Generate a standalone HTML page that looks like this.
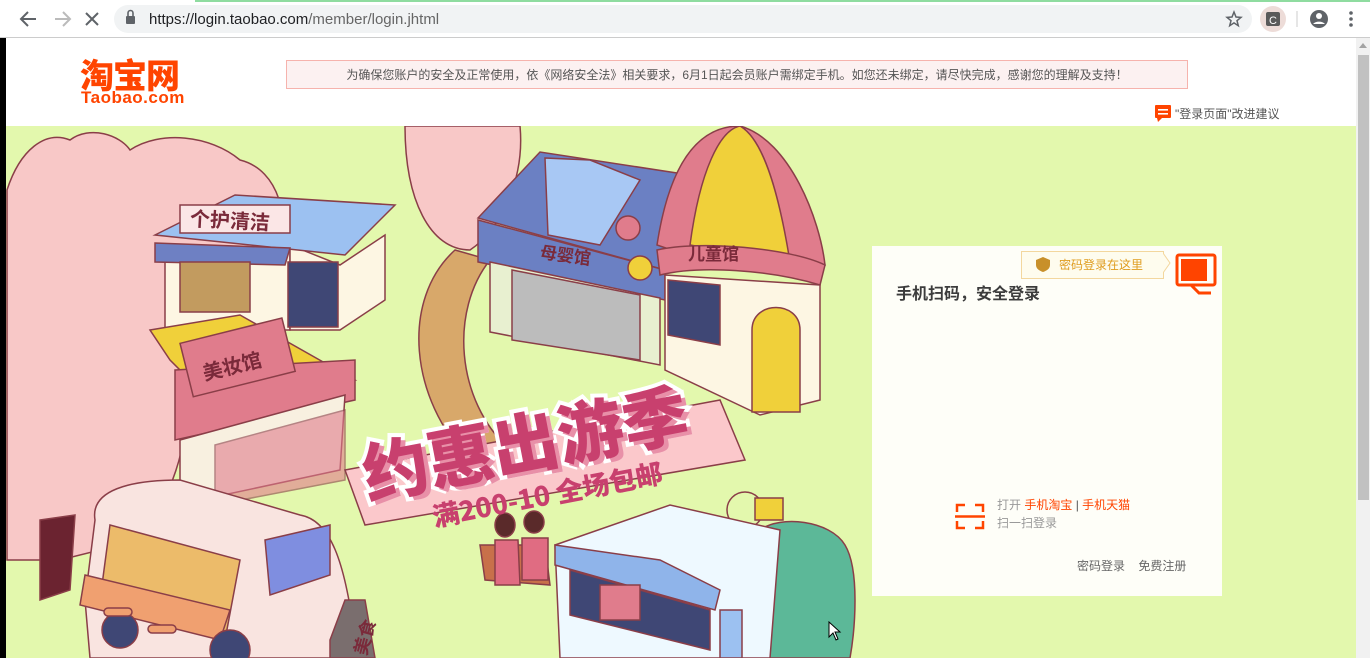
<!DOCTYPE html>
<html><head><meta charset="utf-8">
<style>
*{margin:0;padding:0;box-sizing:border-box}
body{width:1370px;height:658px;overflow:hidden;background:#fff;font-family:"Liberation Sans","Noto Sans CJK SC",sans-serif;position:relative}
.abs{position:absolute}
</style></head><body>
<div class="abs" style="left:0;top:0;width:1370px;height:38px;background:#fff;border-bottom:1px solid #ccc"></div>
<div class="abs" style="left:195px;top:0;width:1175px;height:2px;background:#8fdca0"></div>
<svg class="abs" style="left:0;top:0" width="1370" height="38">
<g stroke="#5f6368" stroke-width="2" fill="none">
<path d="M36 19H22M28 12l-7 7 7 7"/>
<path d="M55 19h14M63 12l7 7-7 7" stroke="#bbb"/>
<path d="M86 13l12 12M98 13l-12 12"/>
</g>
<rect x="114" y="5" width="1138" height="28" rx="14" fill="#f1f3f4"/>
<rect x="126" y="16" width="9" height="8" rx="1" fill="#5f6368"/>
<path d="M128 16v-3a2.5 2.5 0 0 1 5 0v3" stroke="#5f6368" stroke-width="1.6" fill="none"/>
<text x="149" y="24" font-family="Liberation Sans" font-size="15" fill="#202124">https://login.taobao.com<tspan fill="#666">/member/login.jhtml</tspan></text>
<path d="M1234 12l2 5 5 .4-4 3.3 1.3 5-4.3-2.8-4.3 2.8 1.3-5-4-3.3 5-.4z" stroke="#5f6368" stroke-width="1.5" fill="none"/>
<circle cx="1273" cy="19" r="13" fill="#eddcd8"/>
<rect x="1266" y="12" width="14" height="14" rx="2" fill="#5a5a5a"/>
<text x="1269" y="24" font-size="11" fill="#fff" font-family="Liberation Sans">C</text>
<line x1="1297" y1="11" x2="1297" y2="27" stroke="#ccc"/>
<circle cx="1319" cy="19" r="9" fill="#5f6368"/>
<circle cx="1319" cy="16" r="3" fill="#fff"/>
<path d="M1313 24a7 5 0 0 1 12 0" fill="#fff"/>
<g fill="#5f6368"><circle cx="1351" cy="13" r="1.8"/><circle cx="1351" cy="19" r="1.8"/><circle cx="1351" cy="25" r="1.8"/></g>
</svg>
<div class="abs" style="left:0;top:38px;width:6px;height:620px;background:#000"></div>
<div class="abs" style="left:1356px;top:38px;width:14px;height:620px;background:#f1f1f1"></div>
<div class="abs" style="left:1358px;top:55px;width:11px;height:445px;background:#c1c1c1"></div>
<div class="abs" style="left:1359px;top:43px;width:0;height:0;border-left:4px solid transparent;border-right:4px solid transparent;border-bottom:5px solid #a3a3a3"></div>
<div class="abs" style="left:80px;top:58px;color:#ff4400;font-size:34px;font-weight:900;font-family:'Noto Sans CJK SC',sans-serif;line-height:32px;height:32px;letter-spacing:-1px">淘宝网</div>
<div class="abs" style="left:81px;top:90px;color:#ff4400;font-size:17px;font-weight:bold;line-height:16px;letter-spacing:0.5px">Taobao.com</div>
<div class="abs" style="left:286px;top:60px;width:902px;height:29px;border:1px solid #f6b3ad;background:#fcf1f1;font-size:12px;color:#555;text-align:center;line-height:28px">为确保您账户的安全及正常使用，依《网络安全法》相关要求，6月1日起会员账户需绑定手机。如您还未绑定，请尽快完成，感谢您的理解及支持！</div>
<svg class="abs" style="left:1155px;top:105px" width="16" height="17"><rect x="0" y="0" width="16" height="13" rx="1" fill="#ff4400"/><path d="M2 13h5l-4 4z" fill="#ff4400"/><rect x="3" y="4" width="10" height="1.6" fill="#fff"/><rect x="3" y="8" width="10" height="1.6" fill="#fff"/></svg>
<div class="abs" style="left:1175px;top:105px;font-size:12px;color:#555">"登录页面"改进建议</div>
<div class="abs" style="left:6px;top:126px;width:1350px;height:532px;background:#e3f8ad;overflow:hidden">
<svg width="1350" height="532" viewBox="6 126 1350 532" style="position:absolute;left:0;top:0">
<g stroke="#8a3e48" stroke-width="1.5">
<path d="M455 250 C400 300 410 400 470 460 L510 450 C455 400 450 310 490 260Z" fill="#d8a86a"/>
<path d="M7 190 C20 150 45 130 70 140 C90 125 120 135 130 150 C160 130 210 135 240 160 C280 170 290 220 280 260 L250 330 L170 330 C200 390 190 470 140 540 L60 560 L7 560Z" fill="#f8c8c7"/>
<path d="M40 520 L75 515 L70 590 L40 600Z" fill="#6b2330"/>
<path d="M405 126 L520 126 C525 180 500 230 470 250 C430 250 405 200 405 126Z" fill="#f8c8c7"/>
<path d="M165 250 L290 250 L290 330 L165 330Z" fill="#fdf6e3"/>
<path d="M290 245 L340 265 L385 235 L385 300 L340 330 L290 330Z" fill="#fdf6e3"/>
<path d="M155 235 L235 195 L395 205 L345 255Z" fill="#9cc1f1"/>
<path d="M155 243 L290 248 L285 265 L155 262Z" fill="#6e80c3"/>
<rect x="180" y="205" width="110" height="28" fill="#fbe6e6"/>
<rect x="180" y="262" width="70" height="50" fill="#c29b5f"/>
<rect x="288" y="262" width="50" height="65" fill="#3f4775"/>
<path d="M150 330 L240 315 L355 380 L210 400 L170 360Z" fill="#f0d03a"/>
<path d="M175 370 L355 360 L355 400 L175 440Z" fill="#e07c8c"/>
<rect x="185" y="330" width="105" height="55" fill="#e07c8c" transform="rotate(-14 237 357)"/>
<path d="M180 440 L345 395 L340 470 L200 500 L180 490Z" fill="#f8f0e0"/>
<path d="M215 445 L345 410 L345 480 L215 505Z" fill="#e07c8c" opacity=".6"/>
<path d="M478 218 L540 152 L690 175 L665 270 Z" fill="#6b80c3"/>
<path d="M545 158 L590 160 L640 180 L600 245 L548 235Z" fill="#a8c8f4"/>
<path d="M478 220 L665 270 L665 300 L478 262Z" fill="#6b80c3"/>
<path d="M490 262 L660 298 L660 365 L490 332Z" fill="#e8f0d0"/>
<path d="M512 270 L640 295 L640 360 L512 340Z" fill="#bcbcbc"/>
<circle cx="628" cy="228" r="12" fill="#e07c8c"/>
<circle cx="640" cy="268" r="12" fill="#f0d03a"/>
<path d="M657 245 C670 160 700 126 740 126 C790 140 820 220 825 265 L730 270Z" fill="#e07c8c"/>
<path d="M690 245 C700 170 720 130 740 126 C765 140 780 200 790 262Z" fill="#f0d03a"/>
<path d="M657 250 C700 240 790 248 825 265 L820 285 C770 270 700 265 660 275Z" fill="#e07c8c"/>
<path d="M665 275 L820 285 L820 400 L760 415 L665 370Z" fill="#fdf6e3"/>
<path d="M668 280 L720 285 L720 345 L668 335Z" fill="#3f4775"/>
<path d="M752 330 C752 300 800 300 800 330 L800 412 L752 412Z" fill="#f0d03a"/>
<path d="M345 470 L720 400 L745 460 L365 525Z" fill="#fbc8cb"/>
<path d="M95 520 C90 490 130 480 180 480 L300 515 C330 520 345 560 355 640 L350 658 L90 658 L85 600Z" fill="#f9e4e0"/>
<path d="M110 525 L240 560 L225 640 L100 600Z" fill="#ecbb6a"/>
<path d="M85 575 L230 610 L220 640 L80 605Z" fill="#f0a070"/>
<path d="M265 540 L330 525 L330 575 L270 595Z" fill="#7f8ee0"/>
<circle cx="120" cy="630" r="18" fill="#3f4775"/>
<circle cx="230" cy="650" r="20" fill="#3f4775"/>
<rect x="104" y="608" width="28" height="8" rx="4" fill="#f0a070"/>
<rect x="148" y="625" width="28" height="8" rx="4" fill="#f0a070"/>
<path d="M330 640 L345 600 L365 600 L375 658 L330 658Z" fill="#7a6e6e"/>
<path d="M760 530 C780 515 830 520 845 545 C860 570 855 630 850 658 L770 658 C760 610 750 560 760 530Z" fill="#5cb898"/>
<circle cx="745" cy="510" r="18" fill="none"/>
<rect x="755" y="498" width="28" height="22" fill="#f0d03a"/>
<path d="M555 545 L670 505 L780 530 L770 658 L560 658Z" fill="#eef9ff"/>
<path d="M555 545 L660 560 L720 590 L715 610 L555 565Z" fill="#8fb4ea"/>
<path d="M570 570 L710 610 L710 650 L570 615Z" fill="#3f4775"/>
<rect x="600" y="585" width="40" height="35" fill="#e07c8c"/>
<rect x="720" y="610" width="22" height="48" fill="#9cc1f1"/>
<path d="M480 545 L545 545 L550 585 L485 580Z" fill="#c8704a"/>
<ellipse cx="505" cy="525" rx="10" ry="12" fill="#5a2a2a"/>
<ellipse cx="534" cy="522" rx="10" ry="11" fill="#5a2a2a"/>
<path d="M495 540 L518 540 L520 585 L495 585Z" fill="#e06c82"/>
<path d="M522 538 L548 538 L548 580 L522 580Z" fill="#e06c82"/>
</g>
<g font-family="'Noto Sans CJK SC',sans-serif" font-weight="bold" fill="#7a2a3a">
<text x="190" y="228" font-size="20" transform="rotate(3 235 220)">个护清洁</text>
<text x="200" y="372" font-size="20" transform="rotate(-14 237 357)">美妆馆</text>
<text x="540" y="262" font-size="17" transform="rotate(8 570 255)">母婴馆</text>
<text x="688" y="260" font-size="17">儿童馆</text>
<text x="340" y="658" font-size="18" transform="rotate(-75 352 640)">美食</text>
</g>
<g font-family="'Noto Sans CJK SC',sans-serif" font-weight="900" transform="rotate(-11 540 430)">
<text x="358" y="465" font-size="66" fill="#fff" stroke="#fff" stroke-width="8">约惠出游季</text>
<text x="362" y="469" font-size="66" fill="#e890a8">约惠出游季</text>
<text x="358" y="465" font-size="66" fill="#c8406e">约惠出游季</text>
<text x="418" y="505" font-size="27" fill="#c8406e">满200-10 全场包邮</text>
</g>
</svg>
</div>
<div class="abs" style="left:872px;top:246px;width:350px;height:350px;background:#fefef8"></div>
<div class="abs" style="left:1021px;top:251px;width:143px;height:28px;background:#fefcee;border:1px solid #f3d79e;font-size:12px;color:#df9c1f;line-height:26px;padding-left:37px">密码登录在这里</div>
<svg class="abs" style="left:1036px;top:257px" width="14" height="15"><path d="M7 0 L14 3 V8 C14 12 10 14 7 15 C4 14 0 12 0 8 V3Z" fill="#c8902a"/></svg>
<svg class="abs" style="left:1163px;top:253px" width="56" height="42"><path d="M0 0 L7 10 L0 20" fill="#fefcee" stroke="#f3d79e"/><rect x="14" y="2" width="38" height="30" rx="2" fill="none" stroke="#ff4400" stroke-width="3"/><rect x="18" y="6" width="26" height="22" fill="#ff4400"/><path d="M28 32 L36 40 H48" stroke="#ff4400" stroke-width="3" fill="none"/></svg>
<div class="abs" style="left:896px;top:280px;font-size:16px;font-weight:bold;color:#3c3c3c">手机扫码，安全登录</div>
<svg class="abs" style="left:954px;top:502px" width="32" height="29"><g stroke="#ff4400" stroke-width="2.5" fill="none"><path d="M3 10V3h8M21 3h8v7M3 19v7h8M21 26h8v-7"/><path d="M1 14.5h30"/></g></svg>
<div class="abs" style="left:997px;top:496px;font-size:12px;color:#999;line-height:18px">打开 <span style="color:#ff4400">手机淘宝</span> <span style="color:#555">|</span> <span style="color:#ff4400">手机天猫</span><br>扫一扫登录</div>
<div class="abs" style="left:1077px;top:557px;font-size:12px;color:#666">密码登录&nbsp;&nbsp;&nbsp;&nbsp;免费注册</div>
<svg class="abs" style="left:828px;top:621px" width="14" height="20"><path d="M1 1 L1 16 L5 12 L8 19 L10 18 L7 11 L12 11Z" fill="#fff" stroke="#000"/></svg>
</body></html>
